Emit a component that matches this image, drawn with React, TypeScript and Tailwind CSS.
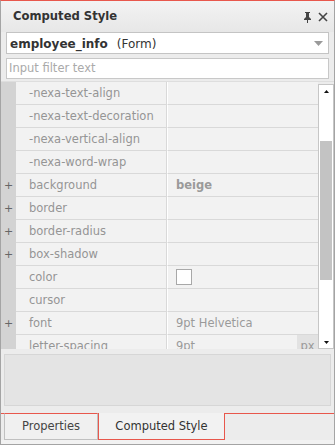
const rows = [
  { name: "-nexa-text-align" },
  { name: "-nexa-text-decoration" },
  { name: "-nexa-vertical-align" },
  { name: "-nexa-word-wrap" },
  { name: "background", plus: true, value: "beige", bold: true },
  { name: "border", plus: true },
  { name: "border-radius", plus: true },
  { name: "box-shadow", plus: true },
  { name: "color", swatch: true },
  { name: "cursor" },
  { name: "font", plus: true, value: "9pt Helvetica" },
  { name: "letter-spacing", value: "9pt", unit: "px" },
];

const font = { fontFamily: "'DejaVu Sans', Verdana, sans-serif" };

function PinIcon() {
  return (
    <svg width="9" height="11" viewBox="0 0 9 11" className="text-[#444]">
      <path d="M2 0h5v1H6v4l2 2v1H5v3H4V8H1V7l2-2V1H2z" fill="currentColor" />
    </svg>
  );
}

function CloseIcon() {
  return (
    <svg width="10" height="10" viewBox="0 0 10 10">
      <path d="M1 1l8 8M9 1l-8 8" stroke="#444" strokeWidth="1.6" />
    </svg>
  );
}

export default function App() {
  return (
    <div style={font} className="w-[335px] h-[445px] flex flex-col bg-[#ececec] border border-[#a4a4a4] border-t-[#e8574c] overflow-hidden">
      <div className="h-[31px] shrink-0 flex items-center justify-between pl-3 pr-[6px] pt-px bg-gradient-to-b from-[#f3f3f3] to-[#e7e7e7]">
        <span className="text-[11.6px] font-bold text-[#333]">Computed Style</span>
        <div className="flex items-center gap-[6px]">
          <PinIcon />
          <CloseIcon />
        </div>
      </div>

      <div className="mx-[5px] h-[22px] shrink-0 flex items-center justify-between bg-white border border-[#c4c4c4] pl-[3px] pr-[5px] pt-px">
        <span className="text-[12px] text-[#333]">
          <span className="font-bold">employee_info</span>
          <span className="ml-[9px]">(Form)</span>
        </span>
        <svg width="9" height="5" viewBox="0 0 9 5"><path d="M0 0h9L4.5 5z" fill="#9a9a9a" /></svg>
      </div>

      <div className="mx-[5px] mt-[4px] h-[21px] shrink-0 flex items-center bg-white border border-[#c8c8c8] pl-[2px] pt-px">
        <span className="text-[11.5px] text-[#aaa]">Input filter text</span>
      </div>

      <div className="mt-[2px] h-[268px] shrink-0 flex border-t border-[#dedede] overflow-hidden">
        <div className="flex-1 flex flex-col">
          {rows.map((r) => (
            <div key={r.name} className="h-[23px] shrink-0 flex">
              <div className="w-[15px] shrink-0 bg-[#d3d3d3] text-[11px] text-[#666] flex items-center justify-center pt-px">
                {r.plus ? "+" : ""}
              </div>
              <div className="w-[151px] shrink-0 bg-[#f2f2f2] border-b border-[#d9d9d9] border-r pl-[13px] pt-px flex items-center text-[11.5px] text-[#959595]">
                {r.name}
              </div>
              <div className="flex-1 bg-[#f2f2f2] border-b border-[#d9d9d9] border-l border-l-white pl-[8px] flex items-center text-[11.5px] text-[#9a9a9a]">
                {r.swatch && <div className="w-[16px] h-[16px] bg-white border border-[#a8a8a8]" />}
                {r.value && <span className={r.bold ? "font-bold pt-px" : "pt-px"}>{r.value}</span>}
                {r.unit && (
                  <span className="ml-auto h-full w-[21px] bg-[#e2e2e2] flex items-center justify-center pt-px text-[#999]">{r.unit}</span>
                )}
              </div>
            </div>
          ))}
        </div>
        <div className="w-[16px] shrink-0 mt-[2px] bg-white border border-[#c6c6c6] flex flex-col items-center">
          <svg width="5" height="3" viewBox="0 0 5 3" className="mt-[5px]"><path d="M2.5 0L5 3H0z" fill="#111" /></svg>
          <div className="mt-[48px] w-[12px] h-[139px] bg-[#c3c3c3]" />
          <div className="flex-1" />
          <svg width="5" height="3" viewBox="0 0 5 3" className="mb-[4px]"><path d="M0 0h5L2.5 3z" fill="#111" /></svg>
        </div>
      </div>

      <div className="mx-[3px] mt-[5px] h-[52px] shrink-0 bg-[#e4e4e4] border border-[#d6d6d6]" />

      <div className="mt-[7px] h-[27px] shrink-0 flex items-start text-[11.5px]">
        <div className="w-[3px] h-full border-t border-[#e8574c]" />
        <div className="w-[94px] h-full flex items-center justify-center pt-px bg-[#f0f0f0] border border-[#c0c0c0] border-t-[#e8574c] text-[#444]">
          Properties
        </div>
        <div className="w-[127px] h-full flex items-center justify-center pt-px bg-[#f2f2f2] border border-t-0 border-[#e8574c] text-[#333]">
          Computed Style
        </div>
        <div className="flex-1 h-full border-t border-[#e8574c]" />
      </div>
      <div className="flex-1 bg-[#f2f2f2]" />
    </div>
  );
}
